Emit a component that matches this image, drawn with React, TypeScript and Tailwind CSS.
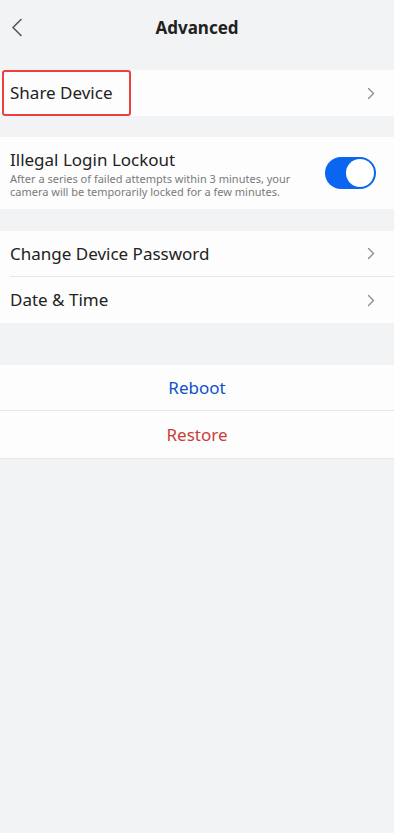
import React from 'react';

function Chevron() {
  return (
    <svg width="8" height="13" viewBox="0 0 8 13" fill="none" className="shrink-0">
      <path d="M1.5 1.5 L6.5 6.5 L1.5 11.5" stroke="#8e8e93" strokeWidth="1.4" strokeLinecap="round" strokeLinejoin="round" />
    </svg>
  );
}

function NavRow({ label, divider }: { label: string; divider?: boolean }) {
  return (
    <div className="flex h-[46px] items-center bg-[#fdfdfd] pl-[10px]">
      <div className={`flex h-full flex-1 items-center justify-between pr-[19px] ${divider ? 'border-b border-[#e6e6e8]' : ''}`}>
        <span className="text-[17px] text-[#222]">{label}</span>
        <Chevron />
      </div>
    </div>
  );
}

export default function App() {
  return (
    <div className="flex min-h-[833px] w-[397px] bg-white" style={{ fontFamily: '"Noto Sans", Roboto, sans-serif' }}>
      <div className="flex w-[394px] flex-col bg-[#f2f3f5]">
        <div className="relative flex h-[56px] items-center justify-center">
          <svg width="12" height="19" viewBox="0 0 12 19" fill="none" className="absolute left-[11px] top-[18px]">
            <path d="M10 1.5 L2 9.5 L10 17.5" stroke="#555" strokeWidth="1.6" strokeLinecap="round" strokeLinejoin="round" />
          </svg>
          <span className="text-[17px] font-bold text-[#222]">Advanced</span>
        </div>

        <div className="mt-[14px] flex h-[46px] items-center bg-[#fdfdfd] pr-[19px]">
          <div className="ml-[2px] flex h-[46px] w-[129px] items-center rounded-[3px] border-2 border-[#ee4040] pl-[6px]">
            <span className="text-[17px] text-[#222]">Share Device</span>
          </div>
          <div className="flex-1" />
          <Chevron />
        </div>

        <div className="mt-[21px] flex h-[72px] items-center bg-[#fdfdfd] pl-[10px] pr-[18px]">
          <div className="flex-1">
            <div className="text-[17px] leading-[22px] text-[#222]">Illegal Login Lockout</div>
            <div className="mt-[1px] text-[11px] leading-[13px] text-[#7a7a7a]">
              After a series of failed attempts within 3 minutes, your
              <br />
              camera will be temporarily locked for a few minutes.
            </div>
          </div>
          <div className="flex h-[32px] w-[51px] items-center justify-end rounded-full bg-[#0a66f0] p-[2px]">
            <div className="h-[28px] w-[28px] rounded-full bg-white" />
          </div>
        </div>

        <div className="mt-[22px]">
          <NavRow label="Change Device Password" divider />
          <NavRow label="Date & Time" />
        </div>

        <div className="mt-[42px] border-b border-[#e6e6e8]">
          <div className="flex h-[46px] items-center justify-center border-b border-[#e6e6e8] bg-[#fdfdfd]">
            <span className="text-[17px] text-[#1050c8]">Reboot</span>
          </div>
          <div className="flex h-[47px] items-center justify-center bg-[#fdfdfd]">
            <span className="text-[17px] text-[#c8403a]">Restore</span>
          </div>
        </div>
      </div>
      <div className="w-[3px] bg-white" />
    </div>
  );
}
